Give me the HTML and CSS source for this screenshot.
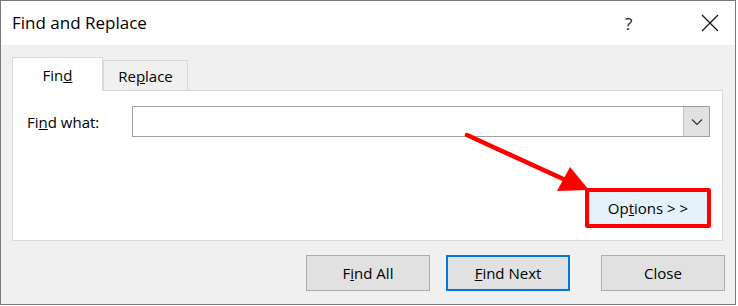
FILE: index.html
```html
<!DOCTYPE html>
<html lang="en">
<head>
    <meta charset="UTF-8">
    <title>Find and Replace</title>
    <link rel="stylesheet" href="styles.css">
</head>
<body>
    <div class="window">
        <div class="titlebar">
            <span class="title">Find and Replace</span>
            <span class="help">?</span>
            <span class="close-x">
                <svg width="18" height="18" viewBox="0 0 18 18"><path d="M1 1L17 17M17 1L1 17" stroke="#111" stroke-width="1.2" fill="none"/></svg>
            </span>
        </div>
        <div class="body">
            <div class="tabs">
                <div class="tab active">Fin<u>d</u></div>
                <div class="tab">Re<u>p</u>lace</div>
            </div>
            <div class="panel">
                <div class="row">
                    <label class="label">Fi<u>n</u>d what:</label>
                    <div class="combo">
                        <div class="combo-text"></div>
                        <div class="combo-btn">
                            <svg width="12" height="8" viewBox="0 0 12 8"><path d="M1 1.5L6 6.5L11 1.5" stroke="#333" stroke-width="1.2" fill="none"/></svg>
                        </div>
                    </div>
                </div>
                <div class="options-row">
                    <div class="highlight">
                        <button class="btn options">Op<u>t</u>ions &gt; &gt;</button>
                    </div>
                </div>
            </div>
            <div class="footer">
                <button class="btn">F<u>i</u>nd All</button>
                <button class="btn primary"><u>F</u>ind Next</button>
                <button class="btn last">Close</button>
            </div>
        </div>
        <svg class="arrow" width="738" height="306" viewBox="0 0 738 306">
            <line x1="467" y1="135" x2="572" y2="183" stroke="#f00" stroke-width="4.5" stroke-linecap="round"/>
            <polygon points="570,167 557,191 589,190" fill="#f00"/>
        </svg>
    </div>
</body>
</html>
```

FILE: styles.css
```css
body {
    margin: 0;
    background: #fff;
    font-family: "Segoe UI", "Open Sans", "Noto Sans", sans-serif;
    color: #000;
}
.window {
    position: relative;
    width: 734px;
    height: 303px;
    border: 1px solid #7a7a7a;
    background: #f0f0f0;
}
.titlebar {
    display: flex;
    align-items: center;
    height: 44px;
    background: #fff;
}
.title {
    font-size: 17px;
    margin-left: 11px;
    margin-top: -1px;
    flex: 1;
}
.help {
    font-size: 17px;
    width: 20px;
    margin-right: 56px;
    color: #222;
}
.close-x {
    display: flex;
    margin-right: 16px;
}
.body {
    padding: 11px 12px 0 11px;
}
.tabs {
    display: flex;
    align-items: flex-end;
    height: 34px;
}
.tab {
    font-size: 15px;
    height: 30px;
    width: 85px;
    box-sizing: border-box;
    border: 1px solid #d9d9d9;
    border-bottom: none;
    display: flex;
    align-items: center;
    justify-content: center;
    background: #f0f0f0;
}
.tab.active {
    height: 34px;
    width: 91px;
    background: #fff;
    border-color: #d9d9d9;
    position: relative;
    top: 1px;
}
.panel {
    height: 151px;
    box-sizing: border-box;
    background: #fff;
    border: 1px solid #d9d9d9;
    padding: 15px 12px 0 14px;
}
.row {
    display: flex;
    align-items: center;
}
.label {
    font-size: 15px;
    width: 105px;
}
.combo {
    display: flex;
    width: 578px;
    height: 31px;
    box-sizing: border-box;
    border: 1px solid #a0a0a0;
}
.combo-text {
    flex: 1;
}
.combo-btn {
    width: 25px;
    background: #e1e1e1;
    border-left: 1px solid #c8c8c8;
    display: flex;
    align-items: center;
    justify-content: center;
}
.options-row {
    display: flex;
    justify-content: flex-end;
    margin-top: 51px;
    margin-right: -1px;
}
.highlight {
    border: 4px solid #f00;
    border-radius: 2px;
    display: flex;
}
.btn {
    font-family: "Segoe UI", "Open Sans", "Noto Sans", sans-serif;
    font-size: 15px;
    width: 124px;
    height: 36px;
    background: #e1e1e1;
    border: 1px solid #adadad;
    color: #000;
    padding: 0;
}
.btn.options {
    width: 118px;
    height: 32px;
    background: #e5f1fb;
    border: none;
}
.btn.primary {
    border: 2px solid #0078d7;
}
.footer {
    display: flex;
    justify-content: flex-end;
    gap: 16px;
    margin-top: 14px;
}
.btn.last {
    margin-left: 15px;
    margin-right: -2px;
}
.arrow {
    position: absolute;
    left: -1px;
    top: -1px;
    pointer-events: none;
}
```
